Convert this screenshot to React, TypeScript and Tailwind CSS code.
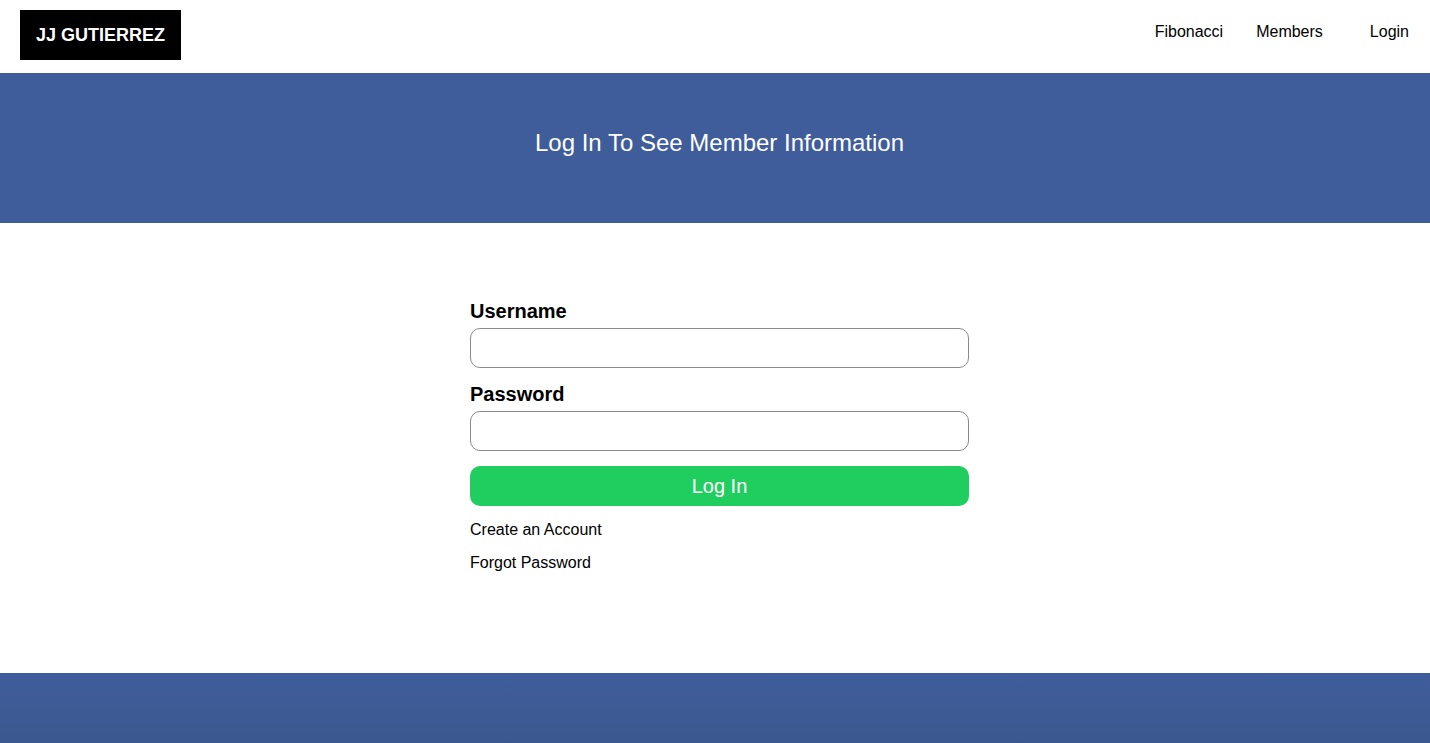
export default function App() {
    return (
        <div className="min-h-screen bg-white text-black font-['Liberation_Sans',Arial,sans-serif]">
            <nav className="h-[73px] flex items-start justify-between pt-[10px] pl-5 pr-[21px]">
                <div className="w-[161px] h-[50px] bg-black flex items-center justify-center">
                    <span className="text-white font-bold text-[18px] leading-none">JJ GUTIERREZ</span>
                </div>
                <div className="flex items-center text-[16px] leading-5 mt-[12px]">
                    <a href="#">Fibonacci</a>
                    <a href="#" className="ml-[33px]">Members</a>
                    <a href="#" className="ml-[47px]">Login</a>
                </div>
            </nav>

            <header className="h-[150px] bg-[#3f5d9b] flex justify-center pt-[56px] pl-[9px]">
                <h1 className="text-white text-[24px] leading-7">Log In To See Member Information</h1>
            </header>

            <main className="h-[450px] flex justify-center pt-[76px] pl-[9px]">
                <form className="w-[499px] flex flex-col" onSubmit={(e) => e.preventDefault()}>
                    <label className="font-bold text-[20px] leading-6">Username</label>
                    <input
                        type="text"
                        className="mt-[5px] h-[40px] w-full rounded-[10px] border border-[#8a8a8a] px-3 outline-none"
                    />
                    <label className="mt-[14px] font-bold text-[20px] leading-6">Password</label>
                    <input
                        type="password"
                        className="mt-[5px] h-[40px] w-full rounded-[10px] border border-[#8a8a8a] px-3 outline-none"
                    />
                    <button
                        type="submit"
                        className="mt-[15px] h-[40px] w-full rounded-[10px] bg-[#20cd5f] text-white text-[20px] leading-6"
                    >
                        Log In
                    </button>
                    <a href="#" className="mt-[14px] text-[16px] leading-5">Create an Account</a>
                    <a href="#" className="mt-[13px] text-[16px] leading-5">Forgot Password</a>
                </form>
            </main>

            <footer className="h-[70px] bg-gradient-to-b from-[#3f5d9b] to-[#3c5890]" />
        </div>
    );
}
